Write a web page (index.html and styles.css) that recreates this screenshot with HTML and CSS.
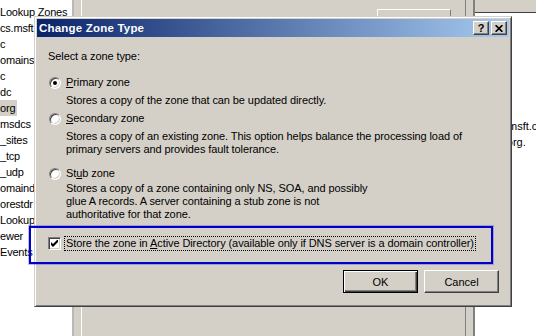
FILE: index.html
```html
<!DOCTYPE html>
<html lang="en">
<head>
	<meta charset="UTF-8">
	<title>Change Zone Type</title>
	<link rel="stylesheet" href="styles.css">
</head>
<body>

	<div class="desktop">
		<div class="tree">
			<div class="node">Lookup Zones</div>
			<div class="node">cs.msft</div>
			<div class="node">c</div>
			<div class="node">omains</div>
			<div class="node">c</div>
			<div class="node">dc</div>
			<div class="node"><span class="sel">org</span></div>
			<div class="node">msdcs</div>
			<div class="node">_sites</div>
			<div class="node">_tcp</div>
			<div class="node">_udp</div>
			<div class="node">omaind</div>
			<div class="node">orestdr</div>
			<div class="node">Lookup</div>
			<div class="node">ewer</div>
			<div class="node">Events</div>
		</div>
		<div class="splitter"></div>
		<div class="behind">
			<div class="behind-btn"></div>
		</div>
		<div class="splitter right"></div>
		<div class="list">
			<div class="list-head"></div>
			<div class="list-row first">msft.c</div>
			<div class="list-row second">msft.org.</div>
		</div>
	</div>

	<div class="dialog">
		<div class="titlebar">
			<span class="title">Change Zone Type</span>
			<span class="tb-btn help">?</span>
			<span class="tb-btn close">
				<svg width="8" height="7" viewBox="0 0 8 7"><path d="M0.6 0.2 L7.4 6.8 M7.4 0.2 L0.6 6.8" stroke="#000" stroke-width="1.7" fill="none"/></svg>
			</span>
		</div>
		<div class="content">
			<div class="prompt">Select a zone type:</div>

			<div class="opt opt-primary"><span class="radio checked"></span><span><u>P</u>rimary zone</span></div>
			<div class="desc desc-primary">Stores a copy of the zone that can be updated directly.</div>

			<div class="opt opt-secondary"><span class="radio"></span><span><u>S</u>econdary zone</span></div>
			<div class="desc desc-secondary">Stores a copy of an existing zone. This option helps balance the processing load of<br>primary servers and provides fault tolerance.</div>

			<div class="opt opt-stub"><span class="radio"></span><span>St<u>u</u>b zone</span></div>
			<div class="desc desc-stub">Stores a copy of a zone containing only NS, SOA, and possibly<br>glue A records. A server containing a stub zone is not<br>authoritative for that zone.</div>

			<div class="check-row">
				<span class="check">
					<svg width="7" height="7" viewBox="0 0 7 7"><path d="M0 2 L2 4 L7 -1 L7 2 L2 7 L0 5 Z" fill="#000"/></svg>
				</span>
				<span class="focus">Store the zone in <u>A</u>ctive Directory (available only if DNS server is a domain controller)</span>
			</div>

			<div class="buttons">
				<button class="btn default">OK</button>
				<button class="btn">Cancel</button>
			</div>
		</div>
	</div>

	<div class="annotation"></div>

</body>
</html>
```

FILE: styles.css
```css
body{
	margin: 0;
	width: 536px;
	height: 336px;
	overflow: hidden;
	position: relative;
	font-family: "Liberation Sans", Arial, sans-serif;
	font-size: 11px;
	color: #000;
	background: #d4d0c8;
}

/* window behind the dialog */
.desktop{
	display: flex;
	height: 336px;
}

.tree{
	width: 72px;
	background: #fff;
	padding-top: 4px;
	white-space: nowrap;
	overflow: hidden;
	letter-spacing: -0.2px;
}

.node{
	height: 16px;
	line-height: 16px;
}

.sel{
	display: inline-block;
	background: #d4d0c8;
	padding-right: 2px;
}

.splitter{
	width: 10px;
	box-sizing: border-box;
	border-left: 2px solid #b8b8b8;
	border-right: 1px solid #fff;
	background: #d4d0c8;
}

.splitter.right{
	border-left: 1px solid #808080;
	border-right: 2px solid #808080;
}

.behind{
	flex: 1;
	background: #d4d0c8;
	padding-top: 9px;
}

.behind-btn{
	margin-left: 295px;
	width: 74px;
	height: 40px;
	box-sizing: border-box;
	border-top: 1px solid #fff;
	border-left: 1px solid #fff;
	border-right: 1px solid #808080;
}

.list{
	width: 61px;
	background: #fff;
	white-space: nowrap;
	overflow: hidden;
}

.list-head{
	height: 12px;
	background: #d4d0c8;
	border-bottom: 1px solid #404040;
}

.list-row{
	height: 16px;
	line-height: 16px;
}

.list-row.first{
	margin-top: 105px;
	padding-left: 33px;
}

.list-row.second{
	padding-left: 8px;
}

/* dialog */
.dialog{
	position: absolute;
	left: 34px;
	top: 16px;
	width: 478px;
	height: 291px;
	box-sizing: border-box;
	background: #d4d0c8;
	border: 1px solid;
	border-color: #d4d0c8 #404040 #404040 #d4d0c8;
	box-shadow: inset 1px 1px #fff, inset -1px -1px #808080;
	padding: 2px;
}

.titlebar{
	height: 18px;
	display: flex;
	align-items: center;
	padding: 0 2px;
	background: linear-gradient(to right, #0a246a, #a6caf0);
}

.title{
	color: #fff;
	font-weight: bold;
	font-size: 11.5px;
	letter-spacing: 0.2px;
	white-space: nowrap;
}

.tb-btn{
	width: 16px;
	height: 14px;
	box-sizing: border-box;
	display: flex;
	align-items: center;
	justify-content: center;
	background: #d4d0c8;
	border: 1px solid;
	border-color: #fff #404040 #404040 #fff;
	box-shadow: inset -1px -1px #808080;
	font-weight: bold;
	font-size: 11px;
	line-height: 1;
}

.help{
	margin-left: auto;
}

.close{
	margin-left: 2px;
}

.content{
	padding: 0 10px 0 11px;
	letter-spacing: -0.09px;
}

.prompt{
	margin-top: 13px;
	line-height: 13px;
}

.opt{
	display: flex;
	align-items: center;
	height: 13px;
	line-height: 13px;
}

.radio{
	position: relative;
	width: 12px;
	height: 12px;
	box-sizing: border-box;
	margin-left: 1px;
	margin-right: 5px;
	border-radius: 50%;
	background: #fff;
	border: 1px solid;
	border-color: #808080 #fff #fff #808080;
	box-shadow: inset 1px 1px #404040, inset -1px -1px #d4d0c8;
}

.radio.checked::after{
	content: "";
	position: absolute;
	left: 3px;
	top: 3px;
	width: 4px;
	height: 4px;
	border-radius: 50%;
	background: #000;
}

.desc{
	padding-left: 18px;
	line-height: 13px;
	white-space: nowrap;
}

.opt-primary{ margin-top: 13px; }
.desc-primary{ margin-top: 5px; }
.opt-secondary{ margin-top: 5px; }
.desc-secondary{ margin-top: 5px; }
.opt-stub{ margin-top: 11px; }
.desc-stub{ margin-top: 2px; }

.check-row{
	margin-top: 15px;
	display: flex;
	align-items: center;
	height: 15px;
}

.check{
	width: 13px;
	height: 13px;
	box-sizing: border-box;
	display: flex;
	align-items: center;
	justify-content: center;
	background: #fff;
	border: 1px solid;
	border-color: #808080 #fff #fff #808080;
	box-shadow: inset 1px 1px #404040, inset -1px -1px #d4d0c8;
	margin-right: 3px;
}

.focus{
	border: 1px dotted #000;
	padding: 0 1px;
	line-height: 13px;
	white-space: nowrap;
}

.buttons{
	margin-top: 19px;
	display: flex;
	justify-content: flex-end;
	gap: 6px;
}

.btn{
	width: 75px;
	height: 23px;
	box-sizing: border-box;
	padding: 0;
	font-family: "Liberation Sans", Arial, sans-serif;
	font-size: 11px;
	color: #000;
	background: #d4d0c8;
	border: 1px solid;
	border-color: #fff #404040 #404040 #fff;
	box-shadow: inset -1px -1px #808080;
}

.btn.default{
	border: 1px solid #000;
	box-shadow: inset 1px 1px #fff, inset -1px -1px #404040, inset -2px -2px #808080;
}

/* blue marker drawn over the screenshot */
.annotation{
	position: absolute;
	left: 29px;
	top: 226px;
	width: 464px;
	height: 38px;
	box-sizing: border-box;
	border: 2px solid #0000c8;
	box-shadow: 0 0 0 1px rgba(40, 40, 210, 0.3);
}
```
